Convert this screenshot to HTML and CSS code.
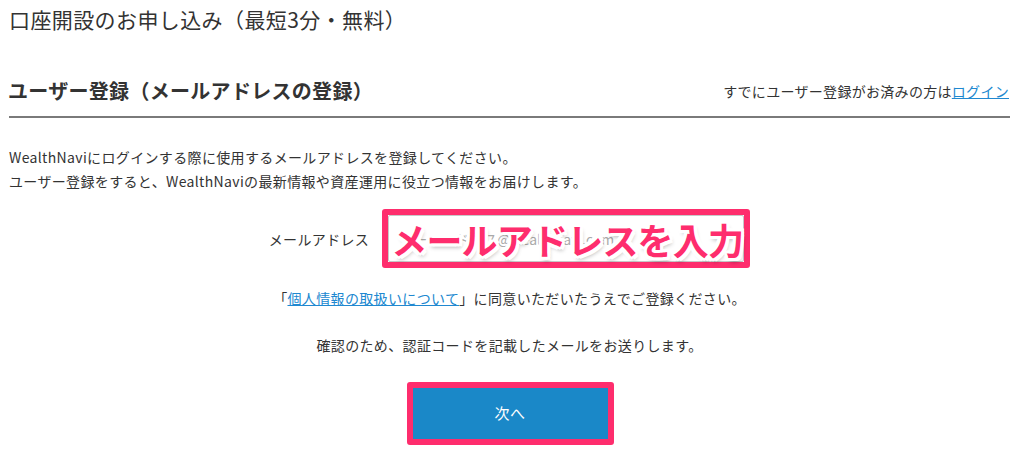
FILE: index.html
```html
<!DOCTYPE html>
<html lang="ja">
<head>
<meta charset="utf-8">
<link rel="stylesheet" href="styles.css">
</head>
<body>
<div class="page">
  <h1 class="title">口座開設のお申し込み（最短3分・無料）</h1>
  <div class="section-head">
    <h2 class="section-title">ユーザー登録（メールアドレスの登録）</h2>
    <div class="login-note">すでにユーザー登録がお済みの方は<a class="link" href="#">ログイン</a></div>
  </div>
  <p class="intro">WealthNaviにログインする際に使用するメールアドレスを登録してください。<br>ユーザー登録をすると、WealthNaviの最新情報や資産運用に役立つ情報をお届けします。</p>
  <div class="form-row">
    <label class="label" for="email">メールアドレス</label>
    <div class="frame">
      <div class="input-wrap">
        <input class="input" id="email" type="text" placeholder="メールアドレス@wealthnavi.com">
        <span class="annotation">メールアドレスを入力</span>
      </div>
    </div>
  </div>
  <p class="consent">「<a class="link" href="#">個人情報の取扱いについて</a>」に同意いただいたうえでご登録ください。</p>
  <p class="confirm">確認のため、認証コードを記載したメールをお送りします。</p>
  <div class="btn-row">
    <div class="btn-frame"><button class="btn" type="button">次へ</button></div>
  </div>
</div>
</body>
</html>
```
FILE: styles.css
```css
html, body {
  margin: 0;
  padding: 0;
  background: #fff;
}
body {
  font-family: "Noto Sans CJK JP", "Noto Sans", sans-serif;
  color: #333;
}
.page {
  padding: 0 14px 0 9px;
}
.title {
  margin: 0;
  padding-top: 4px;
  font-size: 21px;
  line-height: 30px;
  font-weight: normal;
  letter-spacing: 0.4px;
  color: #333;
}
.section-head {
  margin-top: 43px;
  display: flex;
  justify-content: space-between;
  align-items: center;
  padding-bottom: 11px;
  border-bottom: 2px solid #7a7a7a;
}
.section-title {
  margin: 0;
  margin-left: -1px;
  font-size: 20px;
  line-height: 28px;
  font-weight: bold;
  letter-spacing: 0.3px;
  color: #333;
}
.login-note {
  font-size: 14px;
  line-height: 20px;
  letter-spacing: 0.3px;
  padding-right: 1px;
}
.link {
  color: #2088d0;
  text-decoration: underline;
}
.intro {
  margin: 27px 0 0;
  font-size: 14px;
  line-height: 24px;
  letter-spacing: 0.35px;
}
.form-row {
  margin-top: 16px;
  display: flex;
  justify-content: center;
  align-items: center;
  gap: 13px;
}
.label {
  font-size: 14px;
  letter-spacing: 0.35px;
}
.frame {
  border: 6px solid #fe2d6d;
  border-radius: 3px;
  background: #fff;
}
.input-wrap {
  position: relative;
  width: 356px;
  height: 47px;
}
.input {
  box-sizing: border-box;
  width: 100%;
  height: 100%;
  border: 1px solid #c8c8c8;
  border-radius: 2px;
  padding: 0 10px;
  font-family: "Noto Sans CJK JP", sans-serif;
  font-size: 14px;
  color: #333;
  background: #fff;
}
.input::placeholder {
  color: #aaa;
}
.annotation {
  position: absolute;
  left: 3px;
  top: 0;
  bottom: 0;
  display: flex;
  align-items: center;
  font-size: 36px;
  font-weight: bold;
  letter-spacing: -0.8px;
  color: #fe2d6d;
  white-space: nowrap;
  pointer-events: none;
  text-shadow:
    2px 0 0 #fff, -2px 0 0 #fff, 0 2px 0 #fff, 0 -2px 0 #fff,
    2px 2px 0 #fff, -2px -2px 0 #fff, 2px -2px 0 #fff, -2px 2px 0 #fff,
    3px 0 0 #fff, -3px 0 0 #fff, 0 3px 0 #fff, 0 -3px 0 #fff,
    3px 3px 0 #fff, -3px -3px 0 #fff, 3px -3px 0 #fff, -3px 3px 0 #fff,
    2px 4px 4px rgba(0,0,0,0.3);
}
.consent {
  margin: 18px 0 0;
  text-align: center;
  font-size: 14px;
  line-height: 24px;
  letter-spacing: 0.35px;
}
.confirm {
  margin: 23px 0 0;
  text-align: center;
  font-size: 14px;
  line-height: 24px;
  letter-spacing: 0.35px;
}
.btn-row {
  margin-top: 25px;
  display: flex;
  justify-content: center;
}
.btn-frame {
  border: 6px solid #fe2d6d;
  border-radius: 3px;
  margin-left: 1px;
}
.btn {
  display: block;
  width: 195px;
  height: 51px;
  border: 0;
  margin: 0;
  padding: 0 0 2px;
  background: #1a88c8;
  color: #fff;
  font-family: "Noto Sans CJK JP", sans-serif;
  font-size: 15px;
  letter-spacing: 0.5px;
  cursor: pointer;
}
```
